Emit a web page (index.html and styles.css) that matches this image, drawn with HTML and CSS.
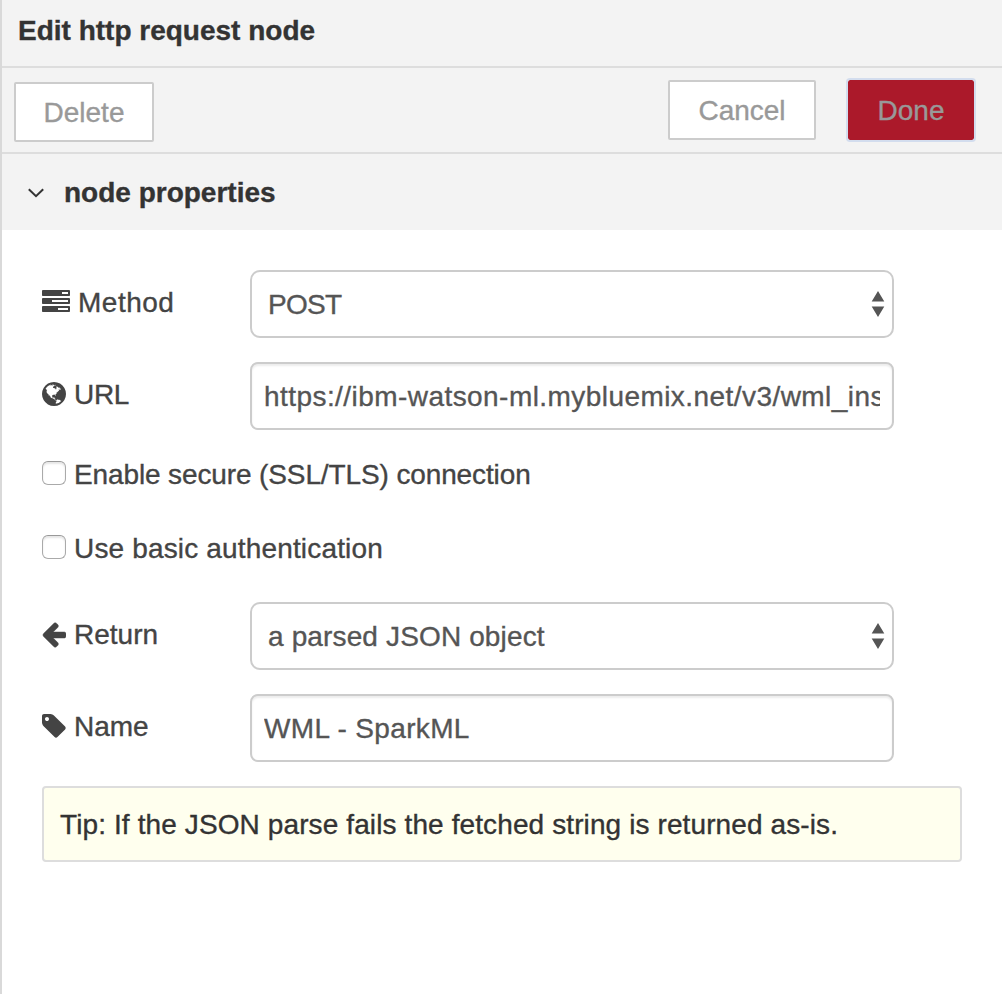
FILE: index.html
```html
<!DOCTYPE html>
<html lang="en">
<head>
<meta charset="utf-8">
<title>Edit http request node</title>
<link rel="stylesheet" href="styles.css">
</head>
<body>
<main class="panel">
  <header class="title">Edit http request node</header>
  <div class="toolbar">
    <button class="btn btn-delete">Delete</button>
    <button class="btn btn-cancel">Cancel</button>
    <button class="btn btn-done">Done</button>
  </div>
  <div class="section">
    <svg class="chevron" width="16" height="10" viewBox="0 0 16 10"><path d="M0.8 1.2L8 8.2L15.2 1.2" fill="none" stroke="#333" stroke-width="2"/></svg>
    <span class="caption">node properties</span>
  </div>
  <form class="form">
    <div class="row">
      <label class="label" for="method">
        <svg class="icon icon-tasks" width="28" height="22" viewBox="0 128 1792 1408"><path d="M1024 1408h640v-128h-640v128zm-384-512h1024v-128h-1024v128zm640-512h384v-128h-384v128zm512 832v256q0 26-19 45t-45 19h-1664q-26 0-45-19t-19-45v-256q0-26 19-45t45-19h1664q26 0 45 19t19 45zm0-512v256q0 26-19 45t-45 19h-1664q-26 0-45-19t-19-45v-256q0-26 19-45t45-19h1664q26 0 45 19t19 45zm0-512v256q0 26-19 45t-45 19h-1664q-26 0-45-19t-19-45v-256q0-26 19-45t45-19h1664q26 0 45 19t19 45z"/></svg>
        <span class="caption t-method">Method</span>
      </label>
      <div class="select-wrap">
        <select class="control select t-post" id="method"><option>POST</option></select>
        <svg class="arrows" width="14" height="26" viewBox="0 0 14 26"><path d="M7 0L13.3 10.6H0.7zM0.7 15.4H13.3L7 26z"/></svg>
      </div>
    </div>
    <div class="row">
      <label class="label" for="url">
        <svg class="icon" width="24" height="24" viewBox="128 128 1536 1536"><path d="M896 128q209 0 385.5 103t279.5 279.5 103 385.5-103 385.5-279.5 279.5-385.5 103-385.5-103-279.5-279.5-103-385.5 103-385.5 279.5-279.5 385.5-103zm274 521q-2 1-9.5 9.5t-13.5 9.5q2 0 4.5-5t5-11 3.5-7q6-7 22-15 14-6 52-12 34-8 51 11-2-2 9.5-13t14.5-12q3-2 15-4.5t15-7.5l2-22q-12 1-17.5-7t-6.5-21q0 2-6 8 0-7-4.5-8t-11.5 1-9 1q-10-3-15-7.5t-8-16.5-4-15q-2-5-9.5-11t-9.5-10q-1-2-2.5-5.5t-3-6.5-4-5.5-5.5-2.5-7 5-7.5 10-4.5 5q-3-2-6-1.5t-4.5 1-4.5 3-5 3.5q-3 2-8.5 3t-8.5 2q15-5-1-11-10-4-16-3 9-4 7.5-12t-8.5-14h5q-1-4-8.5-8.5t-17.5-8.5-13-6q-8-5-34-9.5t-33-.5q-5 6-4.5 10.5t4 14 3.5 12.5q1 6-5.5 13t-6.5 12q0 7 14 15.5t10 21.5q-3 8-16 16t-16 12q-5 8-1.5 18.5t10.5 16.5q2 2 1.5 4t-3.5 4.5-5.5 4-6.5 3.5l-3 2q-11 5-20.5-6t-13.5-26q-7-25-16-30-23-8-29 1-5-13-41-26-25-9-58-4 6-1 0-15-7-15-19-12 3-6 4-17.5t1-13.5q3-13 12-23 1-1 7-8.5t9.5-13.5.5-6q35 4 50-11 5-5 11.5-17t10.5-17q9-6 14-5.5t14.5 5.5 14.5 5q14 1 15.5-11t-7.5-20q12 1 3-17-4-7-8-9-12-4-27 5-8 4 2 8-1-1-9.5 10.5t-16.5 17.5-16-5q-1-1-5.5-13.5t-9.5-13.5q-8 0-16 15 3-8-11-15t-24-8q19-12-8-27-7-4-20.5-5t-19.5 4q-5 7-5.5 11.5t5 8 10.5 5.5 11.5 4 8.5 3q14 10 8 14-2 1-8.5 3.5t-11.5 4.5-6 4q-3 4 0 14t-2 14q-5-5-9-17.5t-7-16.5q7 9-25 6l-10-1q-4 0-16 2t-20.5 1-13.5-8q-4-8 0-20 1-4 4-2-4-3-11-9.5t-10-8.5q-46 15-94 41 6 1 12-1 5-2 13-6.5t10-5.5q34-14 42-7l5-5q14 16 20 25-7-4-30-1-20 6-22 12 7 12 5 18-4-3-11.5-10t-14.5-11-15-5q-16 0-22 1-146 80-235 222 7 7 12 8 4 1 5 9t2.5 11 11.5-3q9 8 3 19 1-1 44 27 19 17 21 21 3 11-10 18-1-2-9-9t-9-4q-3 5 .5 18.5t10.5 12.5q-7 0-9.5 16t-2.5 35.5-1 23.5l2 1q-3 12 5.5 34.5t21.5 19.5q-13 3 20 43 6 8 8 9 3 2 12 7.5t15 10 10 10.5q4 5 10 22.5t14 23.5q-2 6 9.5 20t10.5 23q-1 0-2.5 1t-2.5 1q3 7 15.5 14t15.5 13q1 3 2 10t3 11 8 2q2-20-24-62-15-25-17-29-3-5-5.5-15.5t-4.5-14.5q2 0 6 1.5t8.5 3.5 7.5 4 2 3q-3 7 2 17.5t12 18.5 17 19 12 13q6 6 14 19.5t0 13.5q9 0 20 10.5t17 19.5q5 8 8 26t5 24q2 7 8.5 13.5t12.5 9.5l16 8 13 7q5 2 18.5 10.5t21.5 11.5q10 4 16 4t14.5-2.5 13.5-3.5q15-2 29 15t21 21q36 19 55 11-2 1 .5 7.5t8 15.5 9 14.5 5.5 8.5q5 6 18 15t18 15q6-4 7-9-3 8 7 20t18 10q14-3 14-32-31 15-49-18 0-1-2.5-5.5t-4-8.5-2.5-8.5 0-7.5 5-3q9 0 10-3.5t-2-12.5-4-13q-1-8-11-20t-12-15q-5 9-16 8t-16-9q0 1-1.5 5.5t-1.5 6.5q-13 0-15-1 1-3 2.5-17.5t3.5-22.5q1-4 5.5-12t7.5-14.5 4-12.5-4.5-9.5-17.5-2.5q-19 1-26 20-1 3-3 10.5t-5 11.5-9 7q-7 3-24 2t-24-5q-13-8-22.5-29t-9.5-37q0-10 2.5-26.5t3-25-5.5-24.5q3-2 9-9.5t10-10.5q2-1 4.5-1.5t4.5 0 4-1.5 3-6q-1-1-4-3-3-3-4-3 7 3 28.5-1.5t27.5 1.5q15 11 22-2 0-1-2.5-9.5t-.5-13.5q5 27 29 9 3 3 15.5 5t17.5 5q3 2 7 5.5t5.5 4.5 5-.5 8.5-6.5q10 14 12 24 11 40 19 44 7 3 11 2t4.5-9.5 0-14-1.5-12.5l-1-8v-18l-1-8q-15-3-18.5-12t1.5-18.5 15-18.5q1-1 8-3.5t15.5-6.5 12.5-8q21-19 15-35 7 0 11-9-1 0-5-3t-7.5-5-4.5-2q9-5 2-16 5-3 7.5-11t7.5-10q9 12 21 2 8-8 1-16 5-7 20.5-10.5t18.5-9.5q7 2 8-2t1-12 3-12q4-5 15-9t13-5l17-11q3-4 0-4 18 2 31-11 10-11-6-20 3-6-3-9.5t-15-5.5q3-1 11.5-.5t10.5-1.5q15-10-7-16-17-5-43 12zm-163 877q206-36 351-189-3-3-12.5-4.5t-12.5-3.5q-18-7-24-8 1-7-2.5-13t-8-9-12.5-8-11-7q-2-2-7-6t-7-5.5-7.5-4.5-8.5-2-10 1l-3 1q-3 1-5.5 2.5t-5.5 3-4 3 0 2.5q-21-17-36-22-5-1-11-5.5t-10.5-7-10-1.5-11.5 7q-5 5-6 15t-2 13q-7-5 0-17.5t2-18.5q-3-6-10.5-4.5t-12 4.5-11.5 8.5-9 6.5-8.5 5.5-8.5 7.5q-3 4-6 12t-5 11q-2-4-11.5-6.5t-9.5-5.5q2 10 4 35t5 38q7 31-12 48-27 25-29 40-4 22 12 26 0 7-8 20.5t-7 21.5q0 6 2 16z"/></svg>
        <span class="caption t-url">URL</span>
      </label>
      <input class="control text t-address" id="url" type="text" value="https://ibm-watson-ml.mybluemix.net/v3/wml_ins">
    </div>
    <label class="check-row"><input class="check" type="checkbox"><span class="caption t-secure">Enable secure (SSL/TLS) connection</span></label>
    <label class="check-row"><input class="check" type="checkbox"><span class="caption t-basic">Use basic authentication</span></label>
    <div class="row">
      <label class="label" for="return">
        <svg class="icon icon-arrow" width="24" height="26" viewBox="128 128 1536 1664"><path d="M1664 896v128q0 53-32.5 90.5t-84.5 37.5h-704l293 294q38 36 38 90t-38 90l-75 76q-37 37-90 37-52 0-91-37l-651-652q-37-37-37-90 0-52 37-91l651-650q38-38 91-38 52 0 90 38l75 74q38 38 38 91t-38 91l-293 293h704q52 0 84.5 37.5t32.5 90.5z"/></svg>
        <span class="caption">Return</span>
      </label>
      <div class="select-wrap">
        <select class="control select t-parsed" id="return"><option>a parsed JSON object</option></select>
        <svg class="arrows" width="14" height="26" viewBox="0 0 14 26"><path d="M7 0L13.3 10.6H0.7zM0.7 15.4H13.3L7 26z"/></svg>
      </div>
    </div>
    <div class="row">
      <label class="label" for="name">
        <svg class="icon" width="24" height="24" viewBox="128 128 1536 1536"><path d="M576 448q0-53-37.5-90.5t-90.5-37.5-90.5 37.5-37.5 90.5 37.5 90.5 90.5 37.5 90.5-37.5 37.5-90.5zm1067 576q0 53-37 90l-491 492q-39 37-91 37-53 0-90-37l-715-716q-38-37-64.5-101t-26.5-117v-416q0-52 38-90t90-38h416q53 0 117 26.5t102 64.5l715 714q37 39 37 91z"/></svg>
        <span class="caption">Name</span>
      </label>
      <input class="control text t-spark" id="name" type="text" value="WML - SparkML">
    </div>
    <div class="tip"><span class="caption t-tip">Tip: If the JSON parse fails the fetched string is returned as-is.</span></div>
  </form>
</main>
</body>
</html>
```
FILE: styles.css
```css
* { box-sizing: border-box; }
body {
  margin: 0;
  background: #fff;
  color: #333;
  font: 28px/40px "Liberation Sans", Arial, sans-serif;
  -webkit-text-stroke-width: 0.35px;
}
.panel { min-height: 994px; border-left: 2px solid #d9d9d9; }
.title {
  height: 68px;
  padding: 11px 16px 0;
  background: #f3f3f3;
  border-bottom: 2px solid #ddd;
  font-weight: bold;
}
.toolbar {
  display: flex;
  align-items: flex-start;
  height: 86px;
  padding: 12px 28px 0 12px;
  background: #f3f3f3;
  border-bottom: 2px solid #ddd;
}
.btn {
  height: 60px;
  padding: 2px 0 0;
  border: 2px solid #ccc;
  border-radius: 2px;
  background: #fff;
  color: #999;
  font: inherit;
  -webkit-text-stroke-width: 0.35px;
}
.btn-delete { width: 140px; margin: 2px auto 0 0; }
.btn-cancel { width: 148px; margin-right: 32px; }
.btn-done {
  width: 126px;
  border: 0;
  background: #ab192a;
  outline: 2px solid #d3ddee;
}
.section {
  display: flex;
  align-items: center;
  height: 76px;
  padding-left: 26px;
  background: #f3f3f3;
  font-weight: bold;
}
.chevron { margin: 1px 20px 0 0; }
.caption { padding-top: 2px; }
.form { display: flex; flex-direction: column; padding: 40px; }
.row { display: flex; height: 68px; margin-bottom: 24px; }
.label {
  display: flex;
  align-items: center;
  gap: 8px;
  width: 208px;
  height: 64px;
  color: #444;
}
.icon { fill: #444; flex: none; }
.icon-tasks { margin-top: -2px; }
.icon-arrow { margin-top: 2px; stroke: #444; stroke-width: 30px; }
.control {
  width: 644px;
  height: 68px;
  margin: 0;
  border: 2px solid #ccc;
  border-radius: 8px;
  background: #fff;
  color: #555;
  font: inherit;
  -webkit-text-stroke-width: 0.35px;
}
.text { padding: 2px 12px 0; box-shadow: inset 0 2px 2px rgba(0, 0, 0, 0.075); }
.select-wrap { position: relative; }
.select { appearance: none; padding: 1px 16px 0; border-radius: 10px; }
.arrows { position: absolute; right: 9px; top: 21px; fill: #555; }
.check-row {
  display: flex;
  align-items: center;
  gap: 8px;
  height: 40px;
  margin-bottom: 34px;
  color: #444;
}
.check {
  appearance: none;
  width: 24px;
  height: 24px;
  margin: -3px 0 0;
  border: 1px solid #aaa;
  border-top-color: #999;
  border-radius: 6px;
  background: #fff;
  box-shadow: inset 0 2px 2px rgba(0, 0, 0, 0.1);
}
.tip {
  display: flex;
  align-items: center;
  width: 920px;
  height: 76px;
  padding-left: 16px;
  border: 2px solid #ddd;
  border-radius: 4px;
  background: #ffffee;
}
.t-method { letter-spacing: 0.5px; }
.t-post { letter-spacing: -0.7px; }
.t-url { letter-spacing: -0.3px; }
.t-address { letter-spacing: 0.44px; }
.t-secure { letter-spacing: -0.12px; }
.t-basic { letter-spacing: 0.16px; }
.t-parsed { letter-spacing: 0.14px; }
.t-spark { letter-spacing: 0.35px; }
.t-tip { letter-spacing: 0.11px; }
```
